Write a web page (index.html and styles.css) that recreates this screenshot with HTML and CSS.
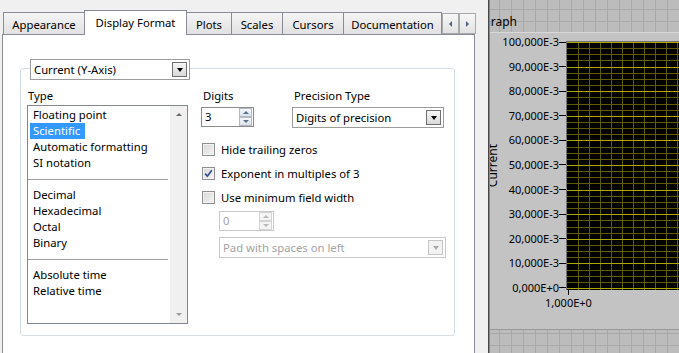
FILE: index.html
```html
<!DOCTYPE html>
<html lang="en">
<head>
    <meta charset="UTF-8">
    <meta name="viewport" content="width=device-width, initial-scale=1.0">
    <title>Graph Properties</title>
    <link rel="stylesheet" href="styles.css">
</head>
<body>
    <div class="dialog">
        <div class="tabs">
            <div class="tab tab-appearance">Appearance</div>
            <div class="tab tab-format active">Display Format</div>
            <div class="tab tab-plots">Plots</div>
            <div class="tab tab-scales">Scales</div>
            <div class="tab tab-cursors">Cursors</div>
            <div class="tab tab-docs">Documentation</div>
            <div class="tab-arrows">
                <div class="tab-arrow arrow-left"></div>
                <div class="tab-arrow arrow-right"></div>
            </div>
        </div>

        <div class="panel">
            <div class="group">
                <div class="dropdown group-head">
                    <span class="dropdown-text">Current (Y-Axis)</span>
                    <span class="dropdown-btn"></span>
                </div>

                <div class="group-body">
                    <div class="type-col">
                        <div class="label">Type</div>
                        <div class="listbox">
                            <div class="list-items">
                                <div class="item"><span>Floating point</span></div>
                                <div class="item selected"><span>Scientific</span></div>
                                <div class="item"><span>Automatic formatting</span></div>
                                <div class="item"><span>SI notation</span></div>
                                <div class="list-sep"></div>
                                <div class="item"><span>Decimal</span></div>
                                <div class="item"><span>Hexadecimal</span></div>
                                <div class="item"><span>Octal</span></div>
                                <div class="item"><span>Binary</span></div>
                                <div class="list-sep"></div>
                                <div class="item"><span>Absolute time</span></div>
                                <div class="item"><span>Relative time</span></div>
                            </div>
                            <div class="scrollbar">
                                <div class="scroll-btn scroll-up"></div>
                                <div class="scroll-btn scroll-down"></div>
                            </div>
                        </div>
                    </div>

                    <div class="format-col">
                        <div class="fields">
                            <div class="field field-digits">
                                <div class="label">Digits</div>
                                <div class="spinner spinner-digits">
                                    <span class="spinner-value">3</span>
                                    <span class="spin-btns">
                                        <span class="spin spin-up"></span>
                                        <span class="spin spin-down"></span>
                                    </span>
                                </div>
                            </div>
                            <div class="field">
                                <div class="label">Precision Type</div>
                                <div class="dropdown dropdown-precision">
                                    <span class="dropdown-text">Digits of precision</span>
                                    <span class="dropdown-btn"></span>
                                </div>
                            </div>
                        </div>

                        <div class="options">
                            <div class="check-row"><span class="checkbox"></span>Hide trailing zeros</div>
                            <div class="check-row">
                                <span class="checkbox">
                                    <svg width="11" height="11" viewBox="0 0 11 11"><path d="M2.2 5.6 L4.4 8.2 L8.8 2.2" fill="none" stroke="#34508c" stroke-width="1.7"/></svg>
                                </span>Exponent in multiples of 3
                            </div>
                            <div class="check-row"><span class="checkbox"></span>Use minimum field width</div>
                        </div>

                        <div class="min-width">
                            <div class="spinner spinner-width disabled">
                                <span class="spinner-value">0</span>
                                <span class="spin-btns">
                                    <span class="spin spin-up"></span>
                                    <span class="spin spin-down"></span>
                                </span>
                            </div>
                            <div class="dropdown dropdown-pad disabled">
                                <span class="dropdown-text">Pad with spaces on left</span>
                                <span class="dropdown-btn"></span>
                            </div>
                        </div>
                    </div>
                </div>
            </div>
        </div>
    </div>

    <div class="front">
        <div class="graph-label">Graph</div>
        <div class="graph">
            <div class="graph-main">
                <div class="yname"><span>Current</span></div>
                <div class="yscale">
                    <div class="ytick">100,000E-3</div>
                    <div class="ytick">90,000E-3</div>
                    <div class="ytick">80,000E-3</div>
                    <div class="ytick">70,000E-3</div>
                    <div class="ytick">60,000E-3</div>
                    <div class="ytick">50,000E-3</div>
                    <div class="ytick">40,000E-3</div>
                    <div class="ytick">30,000E-3</div>
                    <div class="ytick">20,000E-3</div>
                    <div class="ytick">10,000E-3</div>
                    <div class="ytick">0,000E+0</div>
                </div>
                <div class="plot">
                    <svg width="130" height="248" viewBox="0 0 130 248" shape-rendering="crispEdges">
                        <path stroke="#605d00" stroke-width="1" d="M11.5 0V248M22.5 0V248M33.5 0V248M44.5 0V248M55.5 0V248M66.5 0V248M77.5 0V248M88.5 0V248M99.5 0V248M110.5 0V248M121.5 0V248
                            M0 6.5H130M0 12.5H130M0 18.5H130M0 31.5H130M0 37.5H130M0 43.5H130M0 55.5H130M0 62.5H130M0 68.5H130
                            M0 80.5H130M0 86.5H130M0 92.5H130M0 105.5H130M0 111.5H130M0 117.5H130M0 129.5H130M0 135.5H130M0 141.5H130
                            M0 154.5H130M0 160.5H130M0 166.5H130M0 178.5H130M0 185.5H130M0 191.5H130M0 203.5H130M0 209.5H130M0 215.5H130
                            M0 228.5H130M0 234.5H130M0 240.5H130"/>
                        <path stroke="#aca800" stroke-width="1" d="M0 0.5H130M0 25.5H130M0 49.5H130M0 74.5H130M0 98.5H130M0 123.5H130M0 148.5H130M0 172.5H130M0 197.5H130M0 221.5H130M0 246.5H130"/>
                    </svg>
                </div>
            </div>
            <div class="xscale">
                <span class="xtick"></span>
                <span class="xlabel">1,000E+0</span>
            </div>
        </div>
    </div>
</body>
</html>
```

FILE: styles.css
```css
* { box-sizing: border-box; }
body { margin: 0; width: 679px; height: 353px; overflow: hidden; display: flex; background: #f0f0f0; font-family: "Noto Sans", "Segoe UI", sans-serif; font-size: 11.3px; color: #000; }

/* dialog + tabs */
.dialog { width: 489px; flex: none; border-right: 1px solid #474747; }
.tabs { display: flex; align-items: flex-end; height: 34px; padding-left: 3px; }
.tab { height: 22px; margin-left: -1px; padding-top: 2px; border: 1px solid #898c95; border-bottom: none; background: linear-gradient(#f5f5f5, #e1e1e1); display: flex; justify-content: center; align-items: center; white-space: nowrap; }
.tab:first-child { margin-left: 0; }
.tab.active { height: 25px; margin-bottom: -1px; padding: 0 0 1px; background: #fff; position: relative; z-index: 1; }
.tab-appearance { width: 82px; }
.tab-format { width: 103px; }
.tab-plots { width: 46px; }
.tab-scales { width: 52px; }
.tab-cursors { width: 62px; }
.tab-docs { width: 99px; }
.tab-arrows { display: flex; }
.tab-arrow { width: 17px; height: 21px; border: 1px solid #a7a9ad; background: linear-gradient(#f7f7f7, #e2e2e2); display: flex; align-items: center; justify-content: center; }
.arrow-left::before { content: ""; border-top: 3px solid transparent; border-bottom: 3px solid transparent; border-right: 3px solid #4c5f8c; }
.arrow-right::before { content: ""; border-top: 3px solid transparent; border-bottom: 3px solid transparent; border-left: 3px solid #4c5f8c; }

.panel { width: 473px; height: 330px; margin-left: 2px; border: 1px solid #898c95; background: #fff; }

/* group box */
.group { width: 435px; margin: 33px 0 0 17px; padding: 0 0 11px 6px; border: 1px solid #d5dde4; border-radius: 3px; }
.group-head { width: 160px; margin: -10px 0 0 3px; }
.group-body { display: flex; margin-top: 8px; }
.label { height: 16px; line-height: 16px; padding-left: 2px; margin-bottom: 3px; white-space: nowrap; }
.type-col { width: 161px; flex: none; }
.type-col .label { padding-left: 1px; margin-bottom: 1px; }

/* list box */
.listbox { display: flex; height: 219px; border: 1px solid #828790; background: #fff; }
.list-items { flex: 1; padding-top: 1px; }
.item { height: 16px; line-height: 16px; padding-left: 2px; white-space: nowrap; }
.item span { display: inline-block; padding: 0 5px 0 3px; }
.item.selected span { background: #3399ff; color: #fff; }
.list-sep { height: 16px; padding: 8px 2px 0 0; }
.list-sep::before { content: ""; display: block; height: 1px; background: #a0a0a0; }
.scrollbar { width: 17px; background: #f0f0f0; display: flex; flex-direction: column; justify-content: space-between; }
.scroll-btn { height: 17px; display: flex; align-items: center; justify-content: center; }
.scroll-up::before { content: ""; border-left: 3px solid transparent; border-right: 3px solid transparent; border-bottom: 3px solid #6a6a6a; }
.scroll-down::before { content: ""; border-left: 3px solid transparent; border-right: 3px solid transparent; border-top: 3px solid #9a9a9a; }

/* right column */
.format-col { margin-left: 13px; }
.fields { display: flex; }
.field-digits { width: 91px; }

.dropdown { display: flex; align-items: center; height: 21px; padding: 0 2px 0 3px; border: 1px solid #9c9c9c; background: #fff; }
.dropdown-text { flex: 1; white-space: nowrap; }
.dropdown-btn { width: 15px; height: 15px; border: 1px solid #707070; background: linear-gradient(#f6f6f6, #d9d9d9); display: flex; align-items: center; justify-content: center; }
.dropdown-btn::before { content: ""; border-left: 3.5px solid transparent; border-right: 3.5px solid transparent; border-top: 4px solid #000; }
.dropdown-precision { width: 152px; }
.dropdown-pad { width: 227px; margin-top: 6px; }

.spinner { display: flex; height: 20px; padding: 0 1px 0 3px; border: 1px solid #8c8c8c; background: #fff; }
.spinner-value { flex: 1; line-height: 18px; }
.spin-btns { width: 13px; display: flex; flex-direction: column; }
.spin { flex: 1; border: 1px solid #b3bac5; background: linear-gradient(#f6f8fb, #dce2ea); display: flex; align-items: center; justify-content: center; }
.spin-up::before { content: ""; border-left: 3px solid transparent; border-right: 3px solid transparent; border-bottom: 3px solid #56708f; }
.spin-down::before { content: ""; border-left: 3px solid transparent; border-right: 3px solid transparent; border-top: 3px solid #56708f; }
.spinner-digits { width: 53px; }
.spinner-width { width: 55px; }

.options { display: flex; flex-direction: column; gap: 8px; margin-top: 13px; }
.check-row { display: flex; align-items: center; gap: 6px; height: 16px; padding-left: 1px; white-space: nowrap; }
.checkbox { width: 13px; height: 13px; flex: none; border: 1px solid #8e8f8f; background: linear-gradient(135deg, #d6d6d6, #f6f6f6); box-shadow: inset 0 0 0 1px #f3f3f3; display: flex; align-items: center; justify-content: center; }
.min-width { margin: 6px 0 0 18px; }

.disabled { border-color: #cacaca; color: #a3a3a3; }
.disabled .spin { border-color: #d4d4d4; background: #f4f4f4; }
.disabled .spin-up::before { border-bottom-color: #b9b9b9; }
.disabled .spin-down::before { border-top-color: #b9b9b9; }
.disabled .dropdown-btn { border-color: #c6c6c6; background: #f2f2f2; }
.disabled .dropdown-btn::before { border-top-color: #a8a8a8; }

/* front panel with graph */
.front { flex: 1; overflow: hidden; border-left: 1px solid #3d9be6; background-color: #bcbcbc; background-image: linear-gradient(90deg, #a8a8a8 1px, transparent 1px), linear-gradient(#a8a8a8 1px, transparent 1px); background-size: 12px 12px; background-position: 9px 9px; }
.graph-label { margin: 15px 0 0 -8px; line-height: 14px; font-size: 12px; white-space: nowrap; }
.graph { height: 298px; margin-top: 3px; border-top: 1px solid #d9d9d9; border-bottom: 1px solid #999; background: #c3c3c3; font-size: 11px; }
.graph-main { display: flex; align-items: flex-start; height: 257px; }
.yname { width: 13px; height: 249px; margin: 8px 0 0 -4px; flex: none; display: flex; align-items: center; justify-content: center; }
.yname span { writing-mode: vertical-rl; transform: rotate(180deg); font-size: 12px; line-height: 13px; white-space: nowrap; }
.yscale { width: 67px; height: 260px; margin-top: 2px; flex: none; display: flex; flex-direction: column; justify-content: space-between; }
.ytick { display: flex; justify-content: flex-end; align-items: center; height: 14px; line-height: 14px; white-space: nowrap; }
.ytick::after { content: ""; width: 7px; height: 1px; background: #000; }
.plot { flex: 1; height: 249px; margin-top: 8px; overflow: hidden; border-top: 1px solid #727272; border-left: 1px solid #727272; background: #000; }
.plot svg { display: block; }
.xscale { width: 61px; margin-left: 48px; display: flex; flex-direction: column; align-items: center; }
.xtick { width: 1px; height: 5px; background: #000; }
.xlabel { margin-top: 1px; line-height: 14px; white-space: nowrap; }
```
